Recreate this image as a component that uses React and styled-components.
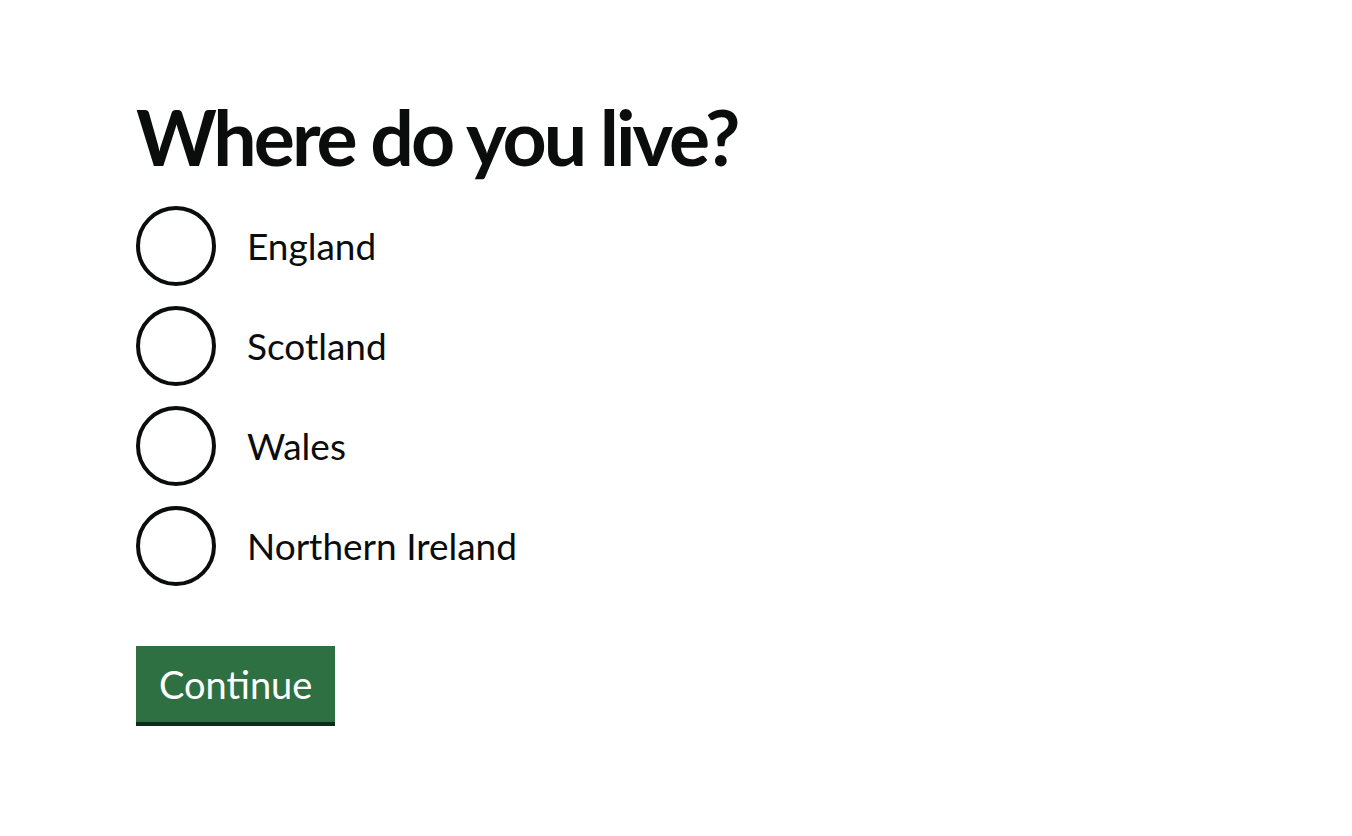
import React from "react";
import styled, { createGlobalStyle } from "styled-components";

const Global = createGlobalStyle`
  html, body {
    margin: 0;
    padding: 0;
    background: #ffffff;
  }
  body {
    font-family: Lato, "Noto Sans", "Liberation Sans", sans-serif;
    color: #0b0c0c;
  }
`

//Page Container
const Page = styled.main`
    padding: 92px 136px 0px 136px;
    width: 1352px;
    height: 836px;
    box-sizing: border-box;
`

//Form
const Form = styled.form`
    flex-direction: column;
    display: flex;
    margin: 0px;
`

//Fieldset
const Fieldset = styled.fieldset`
    border: 0;
    margin: 0px;
    padding: 0px;
    min-width: 0;
`

//Heading
const Legend = styled.legend`
    font-weight: 700;
    font-size: 77px;
    line-height: 88px;
    letter-spacing: -3px;
    margin: 0px 0px 26px 0px;
    padding: 0px;
`

//Radio List
const Radios = styled.div`
    flex-direction: column;
    display: flex;
    gap: 20px;
`

//Radio Row
const Item = styled.label`
    align-items: center;
    display: flex;
    gap: 31px;
    cursor: pointer;
`

//Radio Circle
const Circle = styled.span`
    border: 4px solid #0b0c0c;
    border-radius: 50%;
    box-sizing: border-box;
    flex-shrink: 0;
    height: 80px;
    width: 80px;
`

//Label Text
const Text = styled.span`
    font-size: 37px;
    line-height: 50px;
    margin-top: 0px;
`

//Button
const Button = styled.button`
    background-color: #2f7043;
    box-shadow: 0px 4px 0px #0f2b1b;
    align-self: flex-start;
    font-family: inherit;
    font-size: 38px;
    line-height: 40px;
    color: #ffffff;
    border: 0;
    border-radius: 0;
    padding: 18px 23px 18px 23px;
    margin-top: 60px;
    height: 76px;
    cursor: pointer;
`

const options = ["England", "Scotland", "Wales", "Northern Ireland"]

const App = () => {
    return(
    <>
    <Global />
    <Page>
        <Form onSubmit={e => e.preventDefault()}>
            <Fieldset>
                <Legend>Where do you live?</Legend>
                <Radios>
                    {options.map(o => (
                        <Item key={o}>
                            <Circle />
                            <Text>{o}</Text>
                        </Item>
                    ))}
                </Radios>
            </Fieldset>
            <Button type="submit">Continue</Button>
        </Form>
    </Page>
    </>
    )
}

export default App;
